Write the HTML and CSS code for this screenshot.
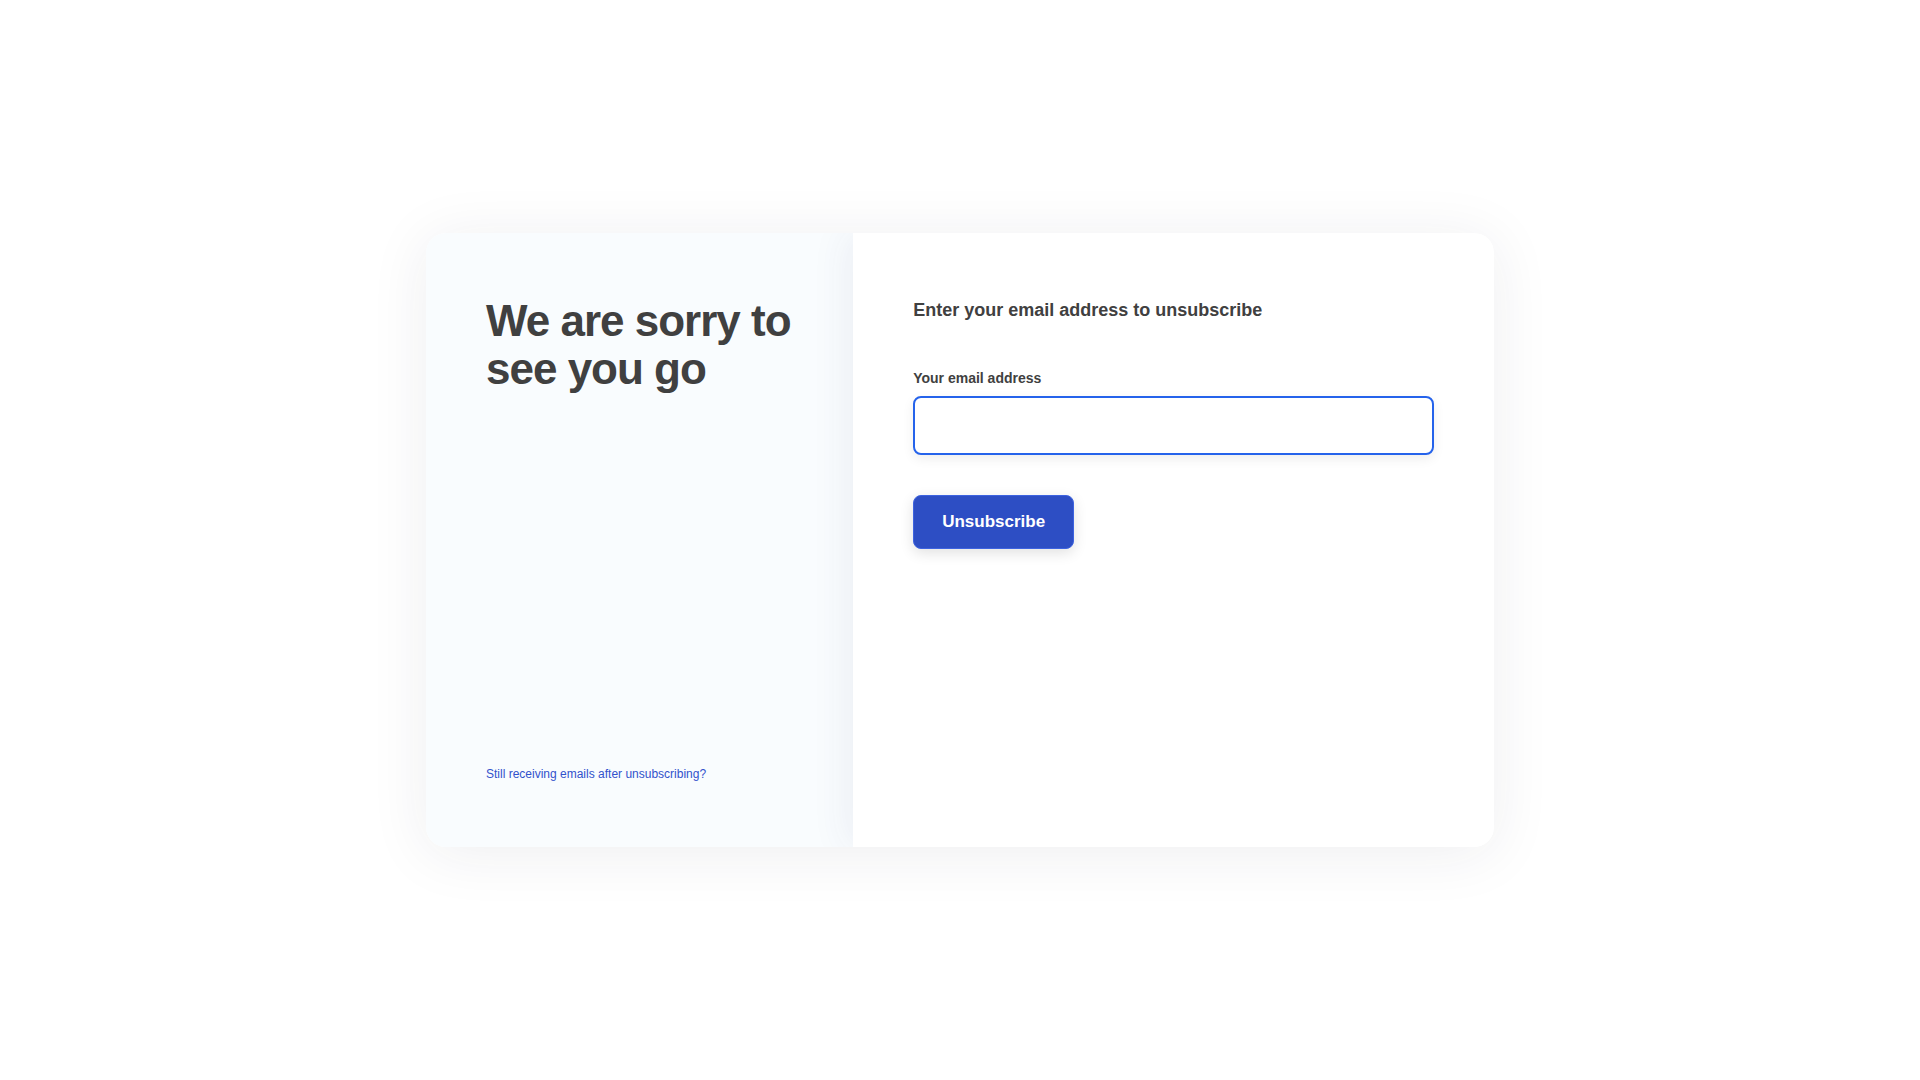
FILE: index.html
```html
<!DOCTYPE html>
<html lang="en">
<head>
    <meta charset="utf-8" />
    <title>Unsubscribe</title>
    <link rel="stylesheet" href="styles.css">
</head>
<body>
    <main class="page">
        <div class="card">
            <div class="card-side">
                <h1 class="side-title">We are sorry to see you go</h1>
                <a class="side-link" href="#">Still receiving emails after unsubscribing?</a>
            </div>

            <!-- form side -->
            <div class="card-main">
                <h2 class="form-title">Enter your email address to unsubscribe</h2>
                <form class="unsub-form" onsubmit="return false;">
                    <label class="field-label" for="email">Your email address</label>
                    <input class="field-input" id="email" type="email" />
                    <button class="btn-unsub" type="submit">Unsubscribe</button>
                </form>
            </div>
        </div>
    </main>
</body>
</html>
```

FILE: styles.css
```css
html, body {
    margin: 0;
    padding: 0;
    background: #ffffff;
}

body {
    font-family: "Liberation Sans", Arial, sans-serif;
    color: #404040;
}

.page {
    height: 100vh;
    display: flex;
    align-items: center;
    justify-content: center;
}

.card {
    width: 1068px;
    height: 614px;
    display: flex;
    background: #ffffff;
    border-radius: 20px;
    overflow: hidden;
    box-shadow: 0 6px 60px rgba(40, 40, 70, 0.08);
}

.card-side {
    width: 40%;
    box-sizing: border-box;
    padding: 64px 60px 64px 60px;
    background: #f9fcfe;
    display: flex;
    flex-direction: column;
    justify-content: space-between;
}

.side-title {
    margin: 0;
    font-size: 44px;
    line-height: 1.1;
    font-weight: 700;
    letter-spacing: -1px;
    color: #404040;
}

.side-link {
    font-size: 12px;
    line-height: 18px;
    color: #3252cc;
    text-decoration: none;
}

.card-main {
    flex: 1;
    box-sizing: border-box;
    padding: 64px 60px;
    background: #ffffff;
    box-shadow: -6px 0 36px rgba(60, 60, 110, 0.07);
}

.form-title {
    margin: 0 0 46px 0;
    font-size: 18px;
    line-height: 27px;
    font-weight: 700;
    color: #404040;
}

.unsub-form {
    display: flex;
    flex-direction: column;
    align-items: flex-start;
}

.field-label {
    font-size: 14px;
    line-height: 16px;
    font-weight: 700;
    color: #404040;
    margin-bottom: 10px;
}

.field-input {
    width: 100%;
    height: 59px;
    box-sizing: border-box;
    margin: 0 0 40px 0;
    padding: 0 16px;
    border: 2px solid #2563eb;
    border-radius: 8px;
    background: #ffffff;
    font-family: "Liberation Sans", Arial, sans-serif;
    font-size: 16px;
    outline: none;
    box-shadow: 0 4px 12px rgba(0, 0, 0, 0.07);
}

.btn-unsub {
    height: 54px;
    box-sizing: border-box;
    padding: 0 28px;
    border: 1px solid #3d63e0;
    border-radius: 8px;
    background: #2d4ec4;
    color: #ffffff;
    font-family: "Liberation Sans", Arial, sans-serif;
    font-size: 17px;
    font-weight: 700;
    cursor: pointer;
    box-shadow: 0 4px 14px rgba(0, 0, 0, 0.12);
}
```
